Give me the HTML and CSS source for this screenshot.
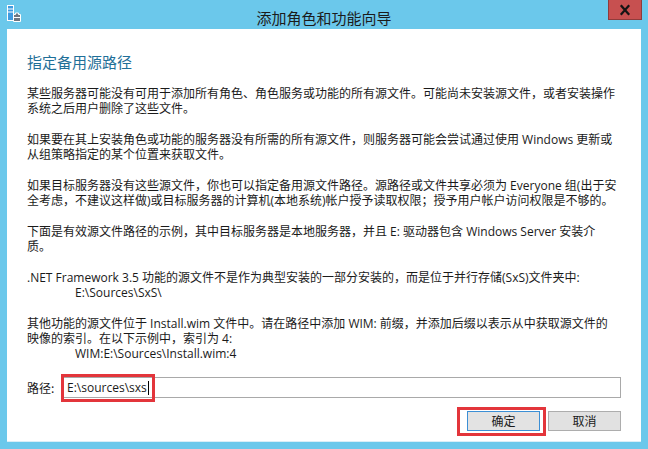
FILE: index.html
```html
<!DOCTYPE html>
<html lang="zh-CN">
<head>
<meta charset="utf-8">
<title>添加角色和功能向导</title>
<link rel="stylesheet" href="styles.css">
</head>
<body>
<div class="window">
  <div class="titlebar">
    <div class="app-icon">
      <svg width="14" height="17" viewBox="0 0 14 17">
        <rect x="0.5" y="0.5" width="6" height="15" fill="#3f9be0" stroke="#ffffff" stroke-width="1"/>
        <line x1="1" y1="4" x2="6" y2="4" stroke="#ffffff" stroke-width="1"/>
        <line x1="1" y1="7" x2="6" y2="7" stroke="#ffffff" stroke-width="1"/>
        <path d="M6.5 9.5 h2 v-1.5 h3 v1.5 h2 v7 h-7 z" fill="#6e7682" stroke="#ffffff" stroke-width="1"/>
        <line x1="7" y1="12.5" x2="13" y2="12.5" stroke="#ffffff" stroke-width="1"/>
      </svg>
    </div>
    <div class="title">添加角色和功能向导</div>
    <div class="close-btn">
      <svg width="34" height="20" viewBox="0 0 34 20">
        <rect x="0.5" y="-1" width="33" height="20.5" fill="#c75050" stroke="#8f3b3b" stroke-width="1"/>
        <path d="M13.5 6 L20.5 14 M20.5 6 L13.5 14" stroke="#141414" stroke-width="2.2" stroke-linecap="square"/>
      </svg>
    </div>
  </div>
  <div class="panel">
    <h1 class="heading">指定备用源路径</h1>
    <p class="para">某些服务器可能没有可用于添加所有角色、角色服务或功能的所有源文件。可能尚未安装源文件，或者安装操作<br>系统之后用户删除了这些文件。</p>
    <p class="para">如果要在其上安装角色或功能的服务器没有所需的所有源文件，则服务器可能会尝试通过使用 Windows 更新或<br>从组策略指定的某个位置来获取文件。</p>
    <p class="para">如果目标服务器没有这些源文件，你也可以指定备用源文件路径。源路径或文件共享必须为 Everyone 组(出于安<br>全考虑，不建议这样做)或目标服务器的计算机(本地系统)帐户授予读取权限；授予用户帐户访问权限是不够的。</p>
    <p class="para">下面是有效源文件路径的示例，其中目标服务器是本地服务器，并且 E: 驱动器包含 Windows Server 安装介<br>质。</p>
    <p class="para">.NET Framework 3.5 功能的源文件不是作为典型安装的一部分安装的，而是位于并行存储(SxS)文件夹中:<br><span class="indent">E:\Sources\SxS\</span></p>
    <p class="para">其他功能的源文件位于 Install.wim 文件中。请在路径中添加 WIM: 前缀，并添加后缀以表示从中获取源文件的<br>映像的索引。在以下示例中，索引为 4:<br><span class="indent">WIM:E:\Sources\Install.wim:4</span></p>
    <div class="path-row">
      <span class="path-label">路径:</span>
      <div class="input">
        <span class="input-text">E:\sources\sxs</span><span class="caret"></span>
        <div class="mark mark-input"></div>
      </div>
    </div>
    <div class="buttons">
      <div class="btn btn-primary">确定<div class="mark mark-btn"></div></div>
      <div class="btn">取消</div>
    </div>
  </div>
</div>
</body>
</html>
```

FILE: styles.css
```css
* { box-sizing: border-box; }
html, body {
  margin: 0;
  padding: 0;
  width: 648px;
  height: 449px;
  overflow: hidden;
  background: #6bc8eb;
  font-family: "Segoe UI", "Open Sans", "Noto Sans CJK SC", sans-serif;
  color: #1a1a1a;
}
.window {
  display: flex;
  flex-direction: column;
  height: 449px;
}
.titlebar {
  height: 29px;
  display: flex;
  align-items: flex-start;
}
.app-icon {
  padding: 5px 0 0 7px;
  width: 21px;
  height: 29px;
  flex: none;
}
.app-icon svg { display: block; }
.title {
  flex: 1;
  text-align: center;
  font-family: "Noto Sans CJK SC", sans-serif;
  font-size: 15px;
  line-height: 20px;
  padding: 8px 0 0 19px;
  color: #1b1b1b;
}
.close-btn {
  flex: none;
  width: 34px;
  height: 20px;
  margin-right: 6px;
}
.close-btn svg { display: block; }
.panel {
  margin: 0 7px;
  height: 413px;
  background: #ffffff;
  padding: 23px 20px 0 20px;
  border-bottom: 1px solid #d9eef7;
}
.heading {
  margin: 0 0 14px 0;
  font-family: "Noto Sans CJK SC", sans-serif;
  font-weight: normal;
  font-size: 15px;
  line-height: 20px;
  color: #1f6f98;
}
.para {
  margin: 0 0 16px 0;
  font-size: 12px;
  line-height: 15px;
  white-space: nowrap;
  font-family: "Segoe UI", "Open Sans", "Noto Sans CJK SC", sans-serif;
}
.indent {
  padding-left: 48px;
}
.path-row {
  display: flex;
  align-items: center;
  margin-top: 1px;
  height: 21px;
}
.path-label {
  width: 36px;
  font-size: 12px;
  font-family: "Noto Sans CJK SC", sans-serif;
}
.input {
  position: relative;
  flex: 1;
  height: 21px;
  border: 1px solid #a9a9a9;
  padding-left: 3px;
  display: flex;
  align-items: center;
  font-size: 12px;
}
.caret {
  width: 1px;
  height: 14px;
  background: #000;
  margin-left: 1px;
}
.mark {
  position: absolute;
  border: 3px solid #e3353b;
}
.mark-input {
  left: -3px;
  top: -4px;
  width: 94px;
  height: 28px;
}
.buttons {
  display: flex;
  justify-content: flex-end;
  gap: 8px;
  margin-top: 13px;
}
.btn {
  position: relative;
  width: 73px;
  height: 20px;
  background: #e1e1e1;
  border: 1px solid #adadad;
  font-family: "Noto Sans CJK SC", sans-serif;
  font-size: 12px;
  line-height: 18px;
  text-align: center;
  color: #1a1a1a;
}
.btn-primary {
  border-color: #3c8fd5;
  background: #e3e3e3;
}
.mark-btn {
  left: -11px;
  top: -5px;
  width: 89px;
  height: 29px;
}
```
